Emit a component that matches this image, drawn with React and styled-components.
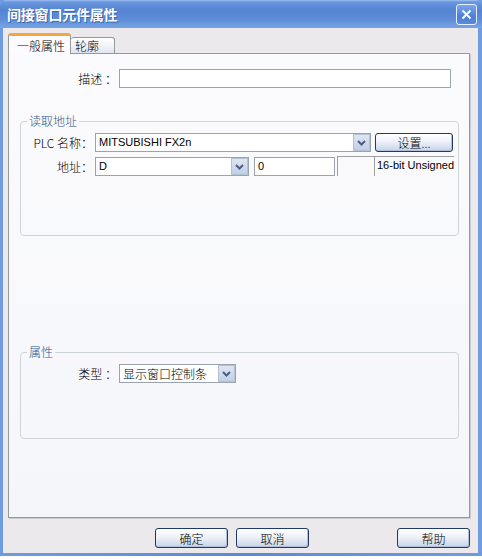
import React from 'react'
import styled, { createGlobalStyle } from 'styled-components'

const Global = createGlobalStyle`
  html, body {
    margin: 0;
    padding: 0;
    background: #fff;
  }
  body {
    font-family: "Liberation Sans", "Noto Sans CJK SC", sans-serif;
    font-size: 12px;
    color: #000;
  }
`

const Window = styled.div`
  width: 482px;
  height: 556px;
  box-sizing: border-box;
  display: flex;
  flex-direction: column;
  background: linear-gradient(to right, #6f9be0, #5b8ad6 50%, #6f9be0);
`

const TitleBar = styled.div`
  height: 28px;
  flex: none;
  display: flex;
  align-items: center;
  justify-content: space-between;
  padding: 0 5px 0 7px;
  border-radius: 6px 6px 0 0;
  background: linear-gradient(to bottom, #9cc0f2 0, #6a96dc 2px, #5484d2 10px, #5f8fd8 20px, #78a4e4 100%);
`

const Title = styled.div`
  color: #fff;
  font-family: "Noto Sans CJK SC", sans-serif;
  font-weight: bold;
  font-size: 14px;
  letter-spacing: -0.2px;
  text-shadow: 1px 1px 0 #3a66b0;
`

const CloseButton = styled.div`
  width: 21px;
  height: 21px;
  box-sizing: border-box;
  margin-top: 1px;
  border: 1px solid #e6eefb;
  border-radius: 3px;
  background: linear-gradient(to bottom, #7aa6ec, #4f7fd4 60%, #5a8ada);
  display: flex;
  align-items: center;
  justify-content: center;
`

const Body = styled.div`
  flex: 1;
  margin: 0 4px 3px 3px;
  padding: 6px 8px 0 5px;
  background: #ece9ed;
  display: flex;
  flex-direction: column;
`

const TabStrip = styled.div`
  height: 19px;
  display: flex;
  align-items: flex-end;
  position: relative;
  z-index: 1;
`

const Tab = styled.div`
  box-sizing: border-box;
  font-family: "Noto Sans CJK SC", sans-serif;
  font-weight: 300;
  font-size: 12px;
  line-height: 14px;
  border: 1px solid #919b9c;
  border-radius: 3px 3px 0 0;
  ${p => p.$active ? `
    width: 63px;
    height: 21px;
    margin-bottom: -1px;
    padding: 3px 0 0 8px;
    border-bottom: none;
    border-top: 3px solid #f5a73c;
    background: #fcfcfe;
  ` : `
    width: 44px;
    height: 16px;
    padding: 1px 0 0 4px;
    border-left: none;
    border-bottom: none;
    background: linear-gradient(to bottom, #fff, #f2f4f8 50%, #dfe5ef);
  `}
`

const Panel = styled.div`
  height: 465px;
  box-sizing: border-box;
  border: 1px solid #919b9c;
  box-shadow: 1px 1px 0 #c9ccd2;
  background: linear-gradient(to bottom, #fbfbfd, #f5f6fa);
  padding: 15px 10px 0 11px;
  display: flex;
  flex-direction: column;
`

const Row = styled.div`
  display: flex;
  align-items: center;
  height: 19px;
  & + & {
    margin-top: 5px;
  }
`

const Label = styled.div`
  width: ${p => p.$w}px;
  flex: none;
  text-align: right;
  padding-right: 2px;
  box-sizing: border-box;
  font-family: "Noto Sans CJK SC", sans-serif;
  font-weight: 300;
  font-size: 12px;
  white-space: pre;
`

const TextBox = styled.div`
  box-sizing: border-box;
  width: ${p => p.$w}px;
  height: ${p => p.$h || 19}px;
  margin-left: ${p => p.$ml || 0}px;
  border: 1px solid #9aa4b0;
  background: #fff;
  padding: 0 3px;
  font-size: 11px;
  line-height: 17px;
  flex: none;
`

const Static = styled.div`
  box-sizing: border-box;
  width: ${p => p.$w}px;
  height: 20px;
  align-self: flex-start;
  margin-top: -1px;
  margin-left: ${p => p.$ml || 0}px;
  border-top: 1px solid #a0a0a0;
  border-left: 1px solid #a0a0a0;
  padding: 0 2px;
  font-size: 11px;
  line-height: 16px;
  flex: none;
  white-space: nowrap;
`

const Select = styled.div`
  box-sizing: border-box;
  width: ${p => p.$w}px;
  height: 19px;
  flex: none;
  display: flex;
  border: 1px solid #9aa4b0;
  background: #fff;
`

const SelectText = styled.div`
  flex: 1;
  padding: 0 3px;
  font-size: ${p => p.$cjk ? 12 : 11}px;
  font-family: ${p => p.$cjk ? '"Noto Sans CJK SC", sans-serif' : 'inherit'};
  font-weight: ${p => p.$cjk ? 300 : 400};
  line-height: 17px;
  white-space: nowrap;
  overflow: hidden;
`

const Arrow = styled.div`
  width: 17px;
  height: 17px;
  box-sizing: border-box;
  border: 1px solid #b3c1d8;
  background: linear-gradient(to bottom, #dfe6f2, #c2cfe3);
  display: flex;
  align-items: center;
  justify-content: center;
`

const Group = styled.fieldset`
  margin: ${p => p.$mt}px 0 0 0;
  padding: 5px 7px 0 7px;
  height: ${p => p.$h}px;
  box-sizing: border-box;
  border: 1px solid #cfd3da;
  border-radius: 4px;
  min-width: 0;
`

const Legend = styled.legend`
  padding: 0 2px;
  margin-left: -1px;
  color: #2a5790;
  font-family: "Noto Sans CJK SC", sans-serif;
  font-weight: 300;
  font-size: 12px;
  line-height: 14px;
`

const Button = styled.div`
  box-sizing: border-box;
  width: ${p => p.$w || 73}px;
  height: ${p => p.$h || 20}px;
  margin-left: ${p => p.$ml || 0}px;
  border: 1px solid #1e3a68;
  border-radius: 3px;
  background: linear-gradient(to bottom, #ffffff, #eef2f9 45%, #c6d3e8);
  box-shadow: inset -1px -1px 0 #b0c0dc;
  display: flex;
  align-items: center;
  justify-content: center;
  font-family: "Noto Sans CJK SC", sans-serif;
  font-weight: 300;
  font-size: 12px;
  flex: none;
  ${p => p.$push && 'margin-left: auto;'}
`

const Footer = styled.div`
  display: flex;
  margin-top: 10px;
  padding-left: 147px;
`

const Chevron = () => (
  <svg width="9" height="6" viewBox="0 0 9 6">
    <path d="M1 1 L4.5 4.5 L8 1" fill="none" stroke="#4a5f86" strokeWidth="2" />
  </svg>
)

const Combo = ({ w, cjk, children }) => (
  <Select $w={w}>
    <SelectText $cjk={cjk}>{children}</SelectText>
    <Arrow><Chevron /></Arrow>
  </Select>
)

export default function App() {
  return (
    <>
      <Global />
      <Window>
        <TitleBar>
          <Title>间接窗口元件属性</Title>
          <CloseButton>
            <svg width="11" height="11" viewBox="0 0 11 11">
              <path d="M1.5 1.5 L9.5 9.5 M9.5 1.5 L1.5 9.5" stroke="#fff" strokeWidth="2" />
            </svg>
          </CloseButton>
        </TitleBar>
        <Body>
          <TabStrip>
            <Tab $active>一般属性</Tab>
            <Tab>轮廓</Tab>
          </TabStrip>
          <Panel>
            <Row>
              <Label $w={99}>{'描述 ：'}</Label>
              <TextBox $w={332} />
            </Row>
            <Group $mt={26} $h={122}>
              <Legend>读取地址</Legend>
              <Row>
                <Label $w={67}>{'PLC 名称：'}</Label>
                <Combo w={276}>MITSUBISHI FX2n</Combo>
                <Button $w={78} $h={19} $ml={4}>设置...</Button>
              </Row>
              <Row>
                <Label $w={67}>地址：</Label>
                <Combo w={154}>D</Combo>
                <TextBox $w={81} $ml={5}>0</TextBox>
                <Static $w={37} $ml={2} />
                <Static $w={80}>16-bit Unsigned</Static>
              </Row>
            </Group>
            <Group $mt={109} $h={94}>
              <Legend>属性</Legend>
              <Row>
                <Label $w={91}>{'类型 ：'}</Label>
                <Combo w={117} cjk>显示窗口控制条</Combo>
              </Row>
            </Group>
          </Panel>
          <Footer>
            <Button>确定</Button>
            <Button $ml={8}>取消</Button>
            <Button $push>帮助</Button>
          </Footer>
        </Body>
      </Window>
    </>
  )
}
